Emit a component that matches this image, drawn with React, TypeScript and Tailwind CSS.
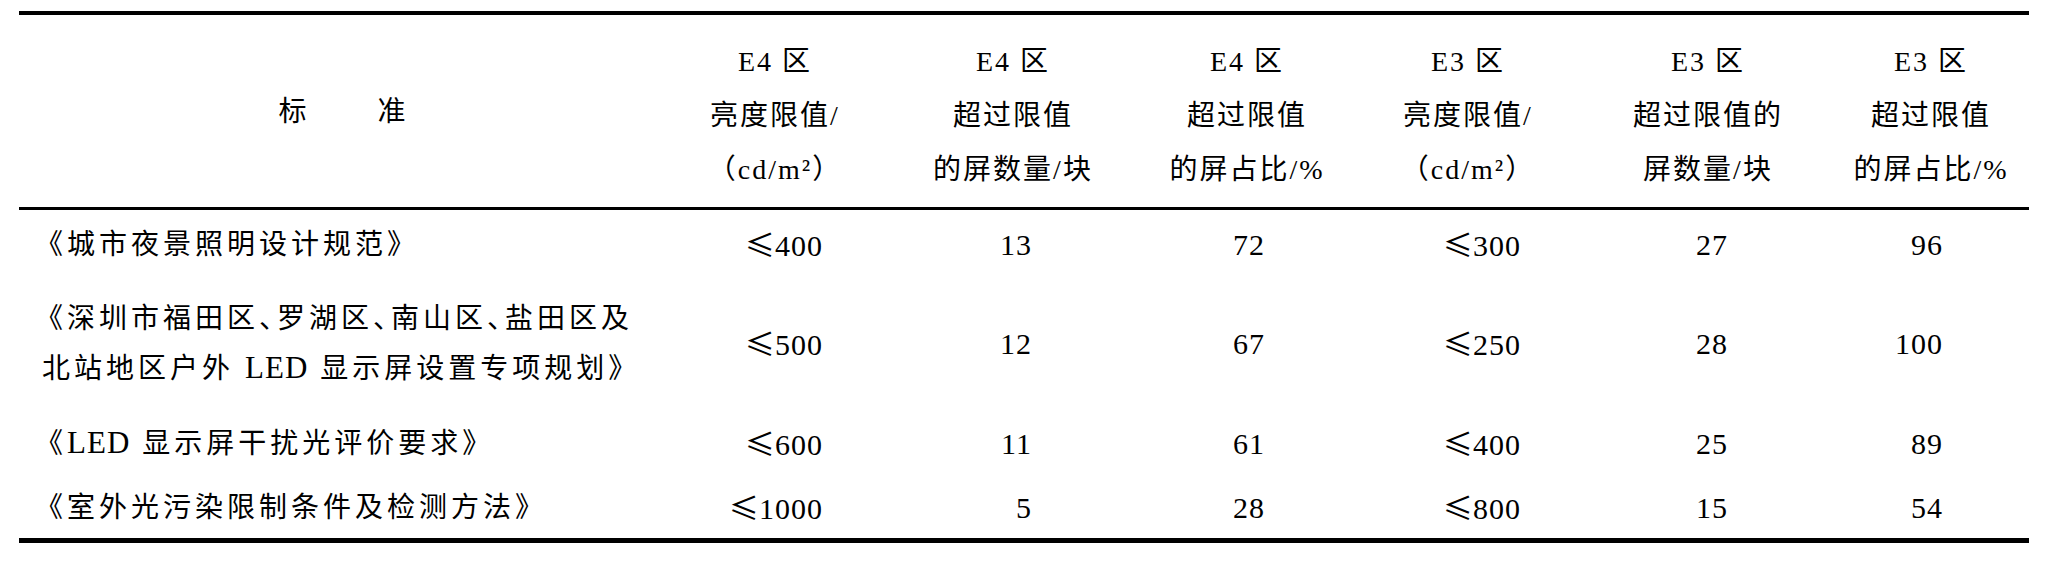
import React from "react";

const font = { fontFamily: '"Liberation Serif", "Noto Sans CJK SC", serif' };

const Dun = () => <span className="tracking-[-10px]">、</span>;
const Led = () => <span className="tracking-[1px] text-[31px] mr-[12px] inline-block">LED</span>;

const rows: { name: React.ReactNode[]; v: string[]; h: string }[] = [
  { name: ["《城市夜景照明设计规范》"], v: ["≤400", "13", "72", "≤300", "27", "96"], h: "h-[64px]" },
  {
    name: [
      <>
        《深圳市福田区<Dun />罗湖区<Dun />南山区<Dun />盐田区及
      </>,
      <span className="pl-[7px]">
        北站地区户外 <Led />
        显示屏设置专项规划》
      </span>,
    ],
    v: ["≤500", "12", "67", "≤250", "28", "100"],
    h: "h-[135px]",
  },
  {
    name: [
      <>
        《<Led />
        显示屏干扰光评价要求》
      </>,
    ],
    v: ["≤600", "11", "61", "≤400", "25", "89"],
    h: "h-[64px]",
  },
  { name: ["《室外光污染限制条件及检测方法》"], v: ["≤1000", "5", "28", "≤800", "15", "54"], h: "h-[65px]" },
];

const pads = ["pr-[62px]", "pr-[109px]", "pr-[88px]", "pr-[62px]", "pr-[105px]", "pr-[86px]"];

const headers = [
  ["E4 区", "亮度限值/", "（cd/m²）"],
  ["E4 区", "超过限值", "的屏数量/块"],
  ["E4 区", "超过限值", "的屏占比/%"],
  ["E3 区", "亮度限值/", "（cd/m²）"],
  ["E3 区", "超过限值的", "屏数量/块"],
  ["E3 区", "超过限值", "的屏占比/%"],
];

const grid = "grid grid-cols-[646px_220px_256px_212px_230px_250px_196px]";

function Num({ t }: { t: string }) {
  if (t.startsWith("≤")) {
    return (
      <span className="whitespace-nowrap">
        <span className="text-[30px]" style={{ fontFamily: '"Noto Sans CJK SC", "DejaVu Sans", sans-serif' }}>
          ≤
        </span>
        <span className="tracking-[1px]">{t.slice(1)}</span>
      </span>
    );
  }
  return <span className="tracking-[1px]">{t}</span>;
}

export default function App() {
  return (
    <div className="w-[2047px] h-[570px] bg-white text-black pt-[11px] pl-[19px]" style={font}>
      <div className="w-[2010px] border-t-[4px] border-b-[5px] border-black text-[28px]">
        <div className={`${grid} h-[195px] border-b-[3px] border-black`}>
          <div className="flex items-center justify-center pt-[2px]">
            <span>标</span>
            <span className="ml-[71px]">准</span>
          </div>
          {headers.map((h, i) => (
            <div
              key={i}
              className="flex flex-col items-center justify-center leading-[54px] pt-[10px] whitespace-nowrap tracking-[2px]"
            >
              {h.map((t, j) => (
                <div key={j}>{t}</div>
              ))}
            </div>
          ))}
        </div>
        {rows.map((r, i) => (
          <div key={i} className={`${grid} ${r.h}`}>
            <div className="flex flex-col justify-center pl-[16px] pt-[4px] leading-[49px] whitespace-nowrap tracking-[4px]">
              {r.name.map((t, j) => (
                <div key={j}>{t}</div>
              ))}
            </div>
            {r.v.map((t, j) => (
              <div key={j} className={`flex items-center justify-end pt-[4px] text-[30px] ${pads[j]} whitespace-nowrap`}>
                <Num t={t} />
              </div>
            ))}
          </div>
        ))}
      </div>
    </div>
  );
}
